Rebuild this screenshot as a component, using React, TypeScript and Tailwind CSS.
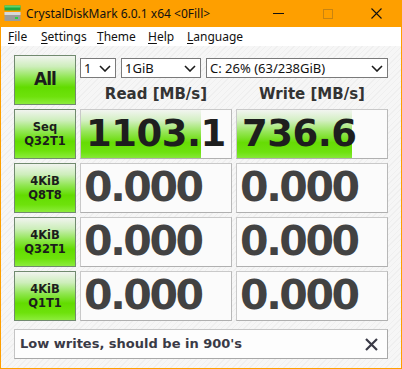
import React from "react";

type Row = {
  l1: string;
  l2: string;
  read: string;
  write: string;
  rf: number;
  wf: number;
  seq?: boolean;
};

const rows: Row[] = [
  { l1: "Seq", l2: "Q32T1", read: "1103.1", write: "736.6", rf: 0.8, wf: 0.767, seq: true },
  { l1: "4KiB", l2: "Q8T8", read: "0.000", write: "0.000", rf: 0, wf: 0 },
  { l1: "4KiB", l2: "Q32T1", read: "0.000", write: "0.000", rf: 0, wf: 0 },
  { l1: "4KiB", l2: "Q1T1", read: "0.000", write: "0.000", rf: 0, wf: 0 },
];

const dv = "font-['DejaVu_Sans',sans-serif] font-bold";
const ui = "font-['Noto_Sans',sans-serif]";
const greenBtn =
  "border border-[#718a6f] bg-[linear-gradient(to_bottom,#f1f4ef_0%,#cdeebb_22%,#8fe650_45%,#62dc00_65%,#6ee20c_85%,#8cec3c_100%)] text-[#1c1c1c]";
const barFill =
  "bg-[linear-gradient(to_bottom,#f2f5f0_0%,#d3efc2_22%,#97e65a_45%,#66dc04_68%,#6ee210_88%,#86e838_100%)]";

const Chevron = () => (
  <svg width="12" height="7" viewBox="0 0 12 7" className="shrink-0">
    <path d="M1 1 L6 6 L11 1" fill="none" stroke="#1b1b1b" strokeWidth="1.6" />
  </svg>
);

const Combo = ({ text, w }: { text: string; w: string }) => (
  <div
    className={`${w} h-[20px] flex items-center justify-between border border-[#7a7a7a] bg-white pl-[3px] pr-[4px] text-[13px] text-[#111] ${ui}`}
  >
    <span className="leading-none">{text}</span>
    <Chevron />
  </div>
);

const ValueBox = ({ value, frac, seq }: { value: string; frac: number; seq?: boolean }) => (
  <div className="relative h-[50px] border border-[#c9c9c9] border-b-[#b0b0b0] border-r-[#b8b8b8] bg-[#fbfbfb] overflow-hidden">
    {frac > 0 && (
      <div className={`absolute left-0 top-0 bottom-0 ${barFill}`} style={{ width: `${frac * 100}%` }} />
    )}
    <div
      className={`relative flex h-full items-center pb-[2px] ${dv} ${
        seq
          ? "pl-[5px] text-[37px] tracking-[-0.5px] text-[#1e1e1e]"
          : "pl-[3px] text-[41px] tracking-[-2.4px] text-[#424242]"
      } leading-none`}
    >
      {value}
    </div>
  </div>
);

const App = () => {
  return (
    <div className="w-[402px] h-[369px] flex flex-col border-x border-b border-[#fe9f00] bg-white overflow-hidden">
      {/* title bar */}
      <div className="h-[27px] shrink-0 flex items-center bg-[#fe9f00]">
        <svg width="17" height="17" viewBox="0 0 17 17" className="ml-[3px] mr-[5px]">
          <rect x="0.5" y="0.5" width="16" height="5" fill="#1fa83a" />
          <rect x="0.5" y="0.5" width="16" height="2" fill="#5fd36e" />
          <rect x="0.5" y="7" width="16" height="9" fill="#9c9c9c" />
          <rect x="0.5" y="7" width="16" height="3" fill="#d8d8d8" />
          <rect x="11" y="12" width="3" height="2" fill="#2fd040" />
        </svg>
        <span className={`text-[12px] text-[#111] ${ui}`}>CrystalDiskMark 6.0.1 x64 &lt;0Fill&gt;</span>
        <div className="ml-auto flex h-full">
          <div className="w-[49px] flex items-center justify-center">
            <div className="w-[11px] h-[1px] bg-[#111]" />
          </div>
          <div className="w-[49px] flex items-center justify-center">
            <div className="w-[10px] h-[10px] border border-[#c98410]" />
          </div>
          <div className="w-[49px] flex items-center justify-center">
            <svg width="11" height="11" viewBox="0 0 11 11">
              <path d="M0.5 0.5 L10.5 10.5 M10.5 0.5 L0.5 10.5" stroke="#111" strokeWidth="1.1" />
            </svg>
          </div>
        </div>
      </div>

      {/* menu */}
      <div className={`h-[19px] shrink-0 flex items-center bg-white pl-[7px] text-[12px] text-[#111] ${ui}`}>
        <span className="w-[33px]"><span className="underline underline-offset-2">F</span>ile</span>
        <span className="w-[56px]"><span className="underline underline-offset-2">S</span>ettings</span>
        <span className="w-[51px]"><span className="underline underline-offset-2">T</span>heme</span>
        <span className="w-[39px]"><span className="underline underline-offset-2">H</span>elp</span>
        <span><span className="underline underline-offset-2">L</span>anguage</span>
      </div>

      {/* content */}
      <div className="flex-1 flex flex-col pl-[13px] pt-[9px] bg-[repeating-linear-gradient(135deg,#f6f6f6_0px,#f6f6f6_3px,#efefef_3px,#efefef_4px)]">
        <div className="grid grid-cols-[62px_152px_152px] gap-x-[4px] gap-y-[4px]">
          <div className={`h-[50px] flex items-center justify-center text-[17px] tracking-[-1px] ${dv} ${greenBtn}`}>
            All
          </div>
          <div className="col-span-2 flex flex-col">
            <div className="flex gap-[5px] mt-[3px]">
              <Combo text="1" w="w-[36px]" />
              <Combo text="1GiB" w="w-[80px]" />
              <Combo text="C: 26% (63/238GiB)" w="w-[182px]" />
            </div>
            <div className={`grid grid-cols-2 gap-x-[4px] mt-[6px] text-[15px] text-[#333] leading-[20px] ${dv}`}>
              <div className="text-center">Read [MB/s]</div>
              <div className="text-center">Write [MB/s]</div>
            </div>
          </div>

          {rows.map((r, i) => (
            <React.Fragment key={i}>
              <div
                className={`h-[50px] flex flex-col items-center justify-center text-[11.5px] leading-[14px] ${dv} ${greenBtn}`}
              >
                <span>{r.l1}</span>
                <span>{r.l2}</span>
              </div>
              <ValueBox value={r.read} frac={r.rf} seq={r.seq} />
              <ValueBox value={r.write} frac={r.wf} seq={r.seq} />
            </React.Fragment>
          ))}
        </div>

        <div className="mt-[8px] w-[374px] h-[30px] flex items-center justify-between border border-[#c4c4c4] border-b-[#a8a8a8] border-r-[#a8a8a8] bg-[#fdfdfd] pl-[5px] pr-[9px]">
          <span className={`text-[13px] text-[#3a3a46] ${dv}`}>Low writes, should be in 900's</span>
          <svg width="13" height="13" viewBox="0 0 13 13">
            <path d="M1 1 L12 12 M12 1 L1 12" stroke="#3a3a46" strokeWidth="2.2" />
          </svg>
        </div>
      </div>
    </div>
  );
};

export default App;
